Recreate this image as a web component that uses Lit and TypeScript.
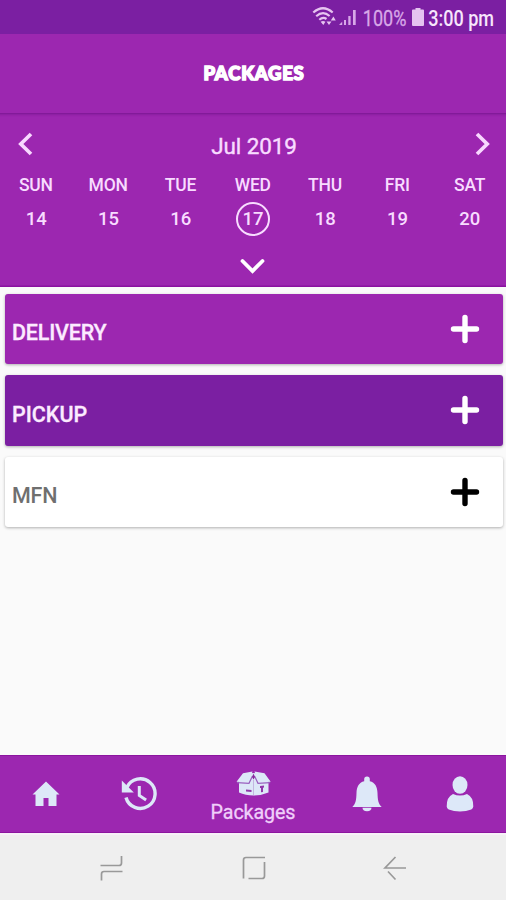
import { LitElement, html, svg, css } from "lit";
import { customElement, property } from "lit/decorators.js";
import { classMap } from "lit/directives/class-map.js";

@customElement("status-bar")
class StatusBar extends LitElement {
  static styles = css`
    :host { display: flex; height: 34px; background: #7b1fa2; align-items: center; justify-content: flex-end; padding-right: 11px; box-sizing: border-box; }
    svg { display: block; flex: none; }
    .text { display: flex; height: 34px; align-items: center; justify-content: center; white-space: nowrap; color: #f7e6fc; }
    .percent { width: 43px; margin: 3px 6px 0 5px; color: #d8a8e8; -webkit-text-stroke: 0.3px #d8a8e8; }
    .clock { width: 67px; margin: 3px 0 0 4px; font-weight: 500; }
    .text span { font-size: 22px; line-height: 34px; transform: scaleX(0.82); }
  `;
  render() {
    return html`
      <svg width="46" height="20" viewBox="311 8 46 20">
        <g fill="none" stroke="#e6c4f0" stroke-width="2.2">
          <path d="M312.3 13.5Q322 5 331.7 13.5M315.2 17.2Q322 11.2 328.6 17M318.3 20.7Q322 17.4 325.5 20" />
        </g>
        <path d="M319.6 22.8Q322 21.2 324.5 22.8L322.3 26ZM325.5 22.5h5l-2.5 3.5zM329.8 21.5l2.6-4 2.4 4z" fill="#e6c4f0" />
        <path d="M338 26L341.2 22.8V26H338ZM343 21h2v5h-2zM347.3 17h2.3v9h-2.3zM352 11h2.7v15H352z" fill="#d8a8e8" />
      </svg>
      <div class="text percent"><span>100%</span></div>
      <svg width="12" height="18" viewBox="0 0 12 18"><path d="M3.5 0h5v1.5H11q1 0 1 1V17q0 1-1 1H1q-1 0-1-1V2.5q0-1 1-1h2.5z" fill="#e5c3f0" /></svg>
      <div class="text clock"><span>3:00 pm</span></div>
    `;
  }
}

@customElement("week-calendar")
class WeekCalendar extends LitElement {
  private days = [["SUN", 14], ["MON", 15], ["TUE", 16], ["WED", 17], ["THU", 18], ["FRI", 19], ["SAT", 20]];
  static styles = css`
    :host { display: block; height: 174px; background: #9c27b0; box-shadow: inset 0 4px 3px -3px #75158d, inset 0 -2px 0 -0.5px #8a12a0; color: #f8dcff; }
    svg { display: block; }
    .month { display: flex; justify-content: space-between; align-items: center; height: 57px; padding: 4px 15px 0 17px; box-sizing: border-box; }
    .name { font-size: 22.5px; line-height: 30px; margin-top: 4px; letter-spacing: -0.1px; -webkit-text-stroke: 0.4px #f8dcff; }
    .week { display: grid; grid-template-columns: repeat(7, 1fr); text-align: center; }
    .label { font-size: 17.5px; line-height: 30px; font-weight: 500; letter-spacing: -0.2px; margin-right: 0.5px; }
    .num { font-size: 18.5px; line-height: 30px; height: 30px; width: 30px; margin: 2px auto 0; font-weight: 500; border: 2px solid transparent; border-radius: 50%; letter-spacing: 0; }
    .today { border-color: #f8dcff; }
    .more { display: flex; justify-content: center; margin-top: 20px; }
  `;
  render() {
    return html`
      <div class="month">
        <svg width="16" height="24" viewBox="0 0 16 24"><path d="M14 2L3.8 12L14 22" fill="none" stroke="#f8d8ff" stroke-width="3.7" /></svg>
        <span class="name">Jul 2019</span>
        <svg width="16" height="24" viewBox="0 0 16 24"><path d="M2 2L12.2 12L2 22" fill="none" stroke="#f8d8ff" stroke-width="3.7" /></svg>
      </div>
      <div class="week">
        ${this.days.map(([d, n]) => html`<div>
          <div class="label">${d}</div>
          <div class=${classMap({ num: true, today: n === 17 })}>${n}</div>
        </div>`)}
      </div>
      <div class="more"><svg width="28" height="18" viewBox="0 0 28 18"><path d="M3.5 5L13.5 15L23.5 5" fill="none" stroke="#fff" stroke-width="3.8" stroke-linecap="round" /></svg></div>
    `;
  }
}

@customElement("package-section")
class PackageSection extends LitElement {
  @property() name = "";
  @property() tone = "delivery";
  static styles = css`
    :host { display: block; }
    .card { display: flex; align-items: center; justify-content: space-between; height: 70.5px; box-sizing: border-box; padding: 0 22px 0 7.5px; border-radius: 3px; box-shadow: 0 1px 3px rgba(0, 0, 0, 0.3); font-size: 21.5px; font-weight: 500; color: #fcebff; }
    .label { margin-top: 7.5px; letter-spacing: -0.2px; -webkit-text-stroke: 0.3px currentColor; }
    .delivery { background: #9c27b0; }
    .pickup { background: #7b1fa2; }
    .pickup .label { letter-spacing: 0; }
    .mfn { background: #fff; color: #6f6f6f; }
    .mfn .label { -webkit-text-stroke: 0; }
    svg { display: block; color: #fff; }
    .mfn svg { color: #000; }
  `;
  render() {
    return html`<div class=${classMap({ card: true, [this.tone]: true })}>
      <span class="label">${this.name}</span>
      <svg width="32" height="32" viewBox="0 0 32 32"><path d="M16 4.5v23M4.5 16h23" stroke="currentColor" stroke-width="5.4" stroke-linecap="round" /></svg>
    </div>`;
  }
}

@customElement("bottom-nav")
class BottomNav extends LitElement {
  static styles = css`
    :host { display: grid; grid-template-columns: 92px 94px 134px 93px 93px; height: 78px; background: #9c27b0; box-sizing: border-box; border-top: 1.5px solid #8c159f; border-bottom: 1.5px solid #8c159f; color: #dde8f8; }
    .item { display: flex; flex-direction: column; align-items: center; justify-content: center; }
    .label { font-size: 19.7px; line-height: 24px; margin-top: 5px; color: #f0cffa; -webkit-text-stroke: 0.3px #f0cffa; letter-spacing: -0.1px; }
    .active { justify-content: flex-start; padding-top: 15px; }
    svg { display: block; }
  `;
  render() {
    return html`
      <div class="item"><svg width="28" height="26" viewBox="0 0 28 26" fill="currentColor"><path d="M14 .5L.5 13.500H3.5V25h8v-8h5v8h8V13.500h3z" /></svg></div>
      <div class="item"><svg width="36" height="36" viewBox="0 0 36 36">
        <path d="M5.8 11.5A14.8 14.8 0 1 1 5 21.5" fill="none" stroke="currentColor" stroke-width="3.4" />
        <path d="M.8 4.5V16.500h12z" fill="currentColor" />
        <path d="M18.3 10v9.5l6.8 4.5" fill="none" stroke="currentColor" stroke-width="3" />
      </svg></div>
      <div class="item active">
        <svg width="35" height="25" viewBox="0 0 35 25">
          <path d="M3 11L7 3 17.500 2 28 3l4.500 8v10.500q-7 3-15 3t-14.500-3z" fill="currentColor" />
          <path d="M7 2.300L16.500 .6 12.800 11.400 .5 10.800zM28.500 2.300L18.500 .6 22.200 11.400 34.700 10.800z" fill="currentColor" />
          <path d="M1 11.600L13 12.300 16.500 5M34.200 11.600L22 12.300 18.500 5" fill="none" stroke="#9a60bf" stroke-width="1.2" />
          <path d="M16 6L17.500 2.500 19 6l-1.500 2.500z" fill="#8a299f" />
          <path d="M17.500 9v15" stroke="#c4b6e1" stroke-width="1" />
          <path d="M10 18.500l5.500 .6v2l-5.500-.7zM24 15l4-.4v2l-1 .2v4.200l-2 .3v-4.300l-1 .1z" fill="#9138aa" />
        </svg>
        <span class="label">Packages</span>
      </div>
      <div class="item"><svg width="30" height="36" viewBox="0 0 30 36" fill="currentColor"><path d="M15 .5a2.8 2.8 0 0 1 2.8 2.8v2C23.200 6.500 25.300 11 25.500 17c.2 7 .8 11 4.200 14H.3C3.700 28 4.300 24 4.500 17c.2-6 2.300-10.500 7.700-11.700V3.300A2.800 2.800 0 0 1 15 .5z" /><path d="M10.500 31.800h9a4.500 3.400 0 0 1-9 0z" /></svg></div>
      <div class="item"><svg width="28" height="36" viewBox="0 0 28 36" fill="currentColor"><ellipse cx="14" cy="9" rx="7.5" ry="8.8" /><path d="M7 18q7 3 14 0Q27.500 21 27.300 30.500q-.2 2-2 3-5 2-11.300 2T2.700 33.500q-1.800-1-2-3Q.5 21 7 18z" /></svg></div>
    `;
  }
}

@customElement("app-root")
class AppRoot extends LitElement {
  static styles = css`
    :host { display: flex; flex-direction: column; width: 506px; height: 900px; overflow: hidden; background: #fafafa; font-family: Roboto, sans-serif; }
    .appbar { display: flex; align-items: center; justify-content: center; height: 79px; background: #9c27b0; }
    .title { font-family: Lato, sans-serif; font-weight: 900; font-size: 18.5px; line-height: 24px; color: #fff; -webkit-text-stroke: 1.5px #fff; letter-spacing: 0.75px; margin: -2px 0 0 2px; }
    .sections { flex: 1; display: flex; flex-direction: column; gap: 11.2px; padding: 6.5px 3px 0 4.5px; }
    .system { display: flex; height: 67px; background: #efefef; box-sizing: border-box; border-top: 2px solid #f7f1f8; justify-content: space-between; align-items: center; padding: 0 99px 0 99px; }
    .system svg { display: block; }
  `;
  render() {
    const line = (d: string) => svg`<path d=${d} fill="none" stroke="#999" stroke-width="1.7" />`;
    return html`
      <status-bar></status-bar>
      <div class="appbar"><span class="title">PACKAGES</span></div>
      <week-calendar></week-calendar>
      <div class="sections">
        <package-section name="DELIVERY" tone="delivery"></package-section>
        <package-section name="PICKUP" tone="pickup"></package-section>
        <package-section name="MFN" tone="mfn"></package-section>
      </div>
      <bottom-nav></bottom-nav>
      <div class="system">
        <svg width="25" height="26" viewBox="0 0 25 26">${line("M1.5 10.5H20q2.5 0 2.5-2.5V1M23.5 16.5H5Q2.5 16.5 2.5 19v6.5")}</svg>
        <svg width="26" height="26" viewBox="0 0 26 26">${line("M2.5 23.5V5Q2.5 2.5 5 2.5h19M7.5 23.5H21q2.5 0 2.5-2.5V7")}</svg>
        <svg width="24" height="26" viewBox="0 0 24 26">${line("M12.5 2L2 13h21M5 16.5l7.5 8")}</svg>
      </div>
    `;
  }
}
